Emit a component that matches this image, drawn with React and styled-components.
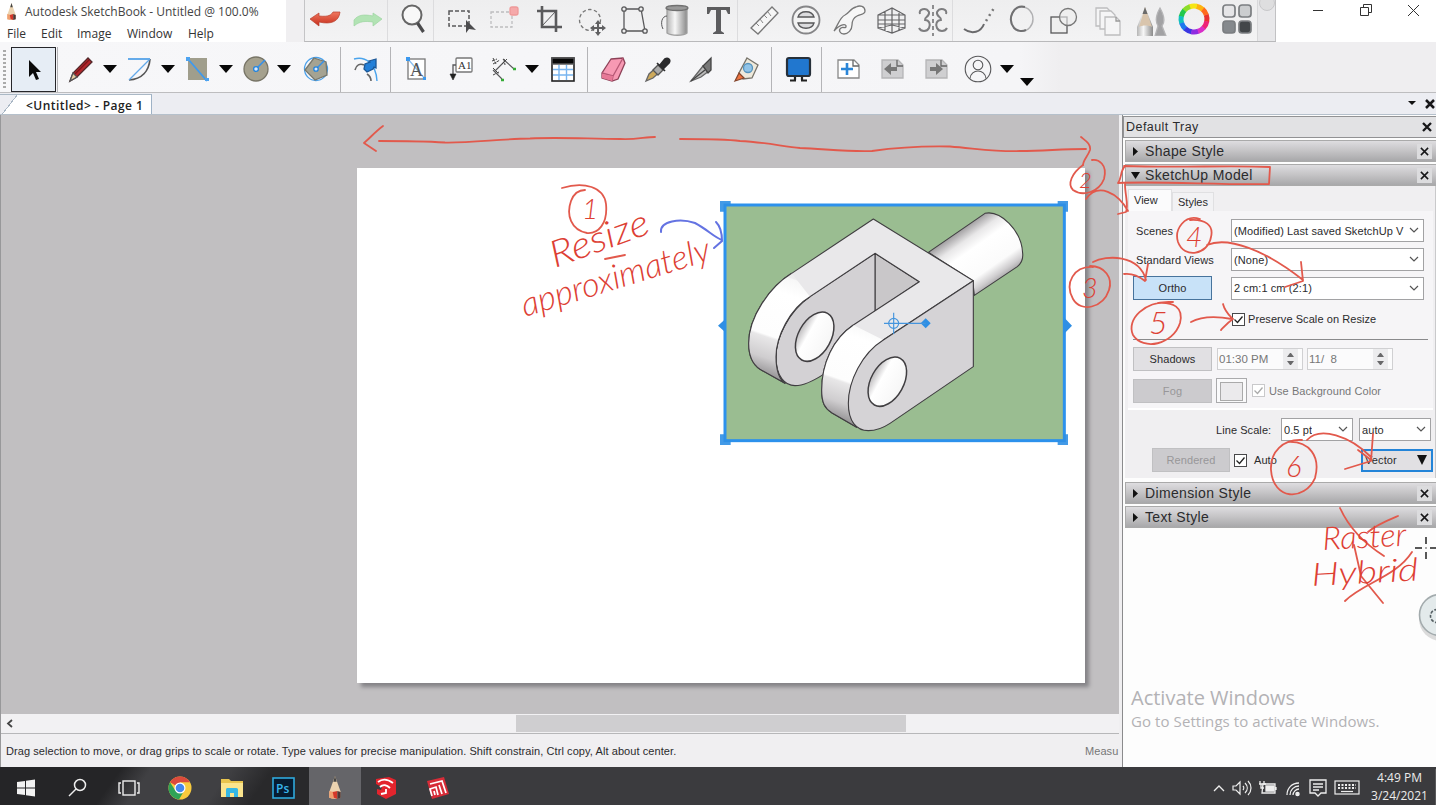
import React from "react";
import styled, { createGlobalStyle, css } from "styled-components";

const Global = createGlobalStyle`
  * { box-sizing: border-box; }
  html, body { margin: 0; padding: 0; overflow: hidden; }
  body { font-family: "Liberation Sans", Arial, sans-serif; font-size: 11px; color: #2b2b2d; }
  svg { display: block; }
`;

const Screen = styled.div`
  position: relative;
  width: 1436px;
  height: 805px;
  overflow: hidden;
  display: flex;
  flex-direction: column;
  background: #f0eff1;
`;

/* ---------- title row ---------- */
const TitleRow = styled.header`
  display: flex;
  height: 42px;
  flex: none;
`;
const TitleBlock = styled.div`
  width: 286px;
  background: #fff;
  font-family: "Open Sans", sans-serif;
  font-size: 12px;
  color: #444;
`;
const TitleLine = styled.div`
  display: flex;
  align-items: center;
  gap: 8px;
  height: 22px;
  padding-left: 6px;
  white-space: nowrap;
`;
const MenuBar = styled.nav`
  display: flex;
  height: 20px;
  padding: 3px 0 0 7px;
  line-height: 18px;
  color: #333;
`;
const MenuItem = styled.span`
  width: ${(p) => p.$w}px;
`;
const BrushBar = styled.div`
  display: flex;
  align-items: center;
  width: 972px;
  margin-left: 18px;
  border-left: 1px solid #c4c4c6;
  border-bottom: 1px solid #b9b9bb;
  background: linear-gradient(#eeeeef, #f3f3f4);
`;
const BrushCell = styled.div`
  width: 40px;
  height: 41px;
  margin-left: ${(p) => p.$gap}px;
  padding-bottom: 4px;
  flex: none;
  display: flex;
  align-items: center;
  justify-content: center;
  border-right: ${(p) => (p.$sep ? "1px solid #dcdcde" : "0")};
`;
const PuckSlot = styled.div`
  flex: 1;
  align-self: stretch;
  overflow: hidden;
  border-left: 1px solid #d8d8da;
  border-right: 1px solid #c2c2c4;
  background: #e8e8ea;
  padding-left: 1px;
`;
const WindowControls = styled.div`
  flex: 1;
  display: flex;
  justify-content: space-between;
  padding: 3px 16px 0 35px;
  background: #fff;
`;

/* ---------- second toolbar ---------- */
const ToolBar = styled.div`
  display: flex;
  align-items: center;
  height: 51px;
  flex: none;
  background: linear-gradient(90deg, #f7f7f9 0, #f5f5f7 1020px, #efeef0 1060px);
  border-bottom: 1px solid #bdbdbf;
`;
const Grip = styled.div`
  width: 3px;
  height: 38px;
  margin: 3px 5px 0 3px;
  background: repeating-linear-gradient(#aaa 0 2px, transparent 2px 4px);
`;
const ActiveTool = styled.div`
  width: 45px;
  height: 45px;
  margin-top: 5px;
  border: 1px solid #26262a;
  background: #e6edf5;
  display: flex;
  align-items: center;
  justify-content: center;
`;
const ToolCell = styled.div`
  width: 28px;
  height: 28px;
  margin: 4px 0 0 ${(p) => p.$gap}px;
  flex: none;
`;
const Divider = styled.div`
  width: 1px;
  height: 45px;
  margin: 5px 0 0 ${(p) => p.$gap}px;
  background: #b4b4b7;
  flex: none;
`;
const Caret = styled.div`
  width: 16px;
  margin: ${(p) => p.$drop || 4}px 0 0 ${(p) => p.$gap}px;
  flex: none;
  display: flex;
  justify-content: center;
  &::after {
    content: "";
    border: 7px solid transparent;
    border-top: 8px solid #080808;
    border-bottom: 0;
  }
`;

/* ---------- tab strip ---------- */
const TabStrip = styled.div`
  display: flex;
  align-items: flex-end;
  justify-content: space-between;
  height: 22px;
  flex: none;
  background: #ecedf2;
  border-bottom: 1px solid #b5c0cb;
`;
const DocTab = styled.div`
  width: 152px;
  height: 20px;
  padding-left: 26px;
  font: 600 12px/21px "Open Sans", sans-serif;
  letter-spacing: 0.45px;
  color: #222;
  white-space: nowrap;
  background: linear-gradient(128deg, transparent 0 13px, #a8b6c4 13px 14px, #fff 14px);
  border-top: 1px solid #aab8c5;
  border-right: 1px solid #9eb2c6;
`;
const StripButtons = styled.div`
  display: flex;
  gap: 9px;
  align-items: center;
  height: 21px;
  padding-right: 1px;
`;

/* ---------- body ---------- */
const Body = styled.main`
  display: flex;
  height: 652px;
  flex: none;
`;
const Left = styled.section`
  width: 1119px;
  flex: none;
  display: flex;
  flex-direction: column;
  border-left: 1px solid #98989a;
`;
const Canvas = styled.div`
  height: 599px;
  padding: 53px 0 0 356px;
  background: #c1bfc1;
`;
const Paper = styled.div`
  position: relative;
  width: 728px;
  height: 515px;
  background: #fff;
  box-shadow: 4px 4px 4px #858387;
`;
const Drawing = styled.svg`
  position: absolute;
  left: 353px;
  top: 22px;
  overflow: visible;
`;
const HScroll = styled.div`
  display: flex;
  height: 20px;
  padding-left: 5px;
  align-items: center;
  background: #f2f1f3;
  border-bottom: 1px solid #b7b7b9;
`;
const Thumb = styled.div`
  width: 390px;
  height: 17px;
  margin-left: 503px;
  background: #cfced0;
`;
const Status = styled.footer`
  flex: 1;
  display: flex;
  justify-content: space-between;
  align-items: center;
  padding-left: 5px;
  white-space: nowrap;
  letter-spacing: 0.078px;
`;

/* ---------- tray ---------- */
const Tray = styled.aside`
  flex: 1;
  min-width: 0;
  margin-left: 3px;
  padding-top: 1px;
  border-left: 1px solid #8b8b8d;
  background: #fdfdfd;
`;
const TrayHead = styled.div`
  display: flex;
  justify-content: space-between;
  align-items: center;
  height: 22px;
  padding: 0 4px 0 2px;
  font-size: 12.5px;
  letter-spacing: 0.45px;
  background: #e2e2e4;
  border: 1px solid #929294;
  border-right: 0;
`;
const SectionHead = styled.div`
  display: flex;
  align-items: center;
  height: 22px;
  margin: ${(p) => p.$mt}px 0 0 2px;
  padding: 0 4px 0 5px;
  font-size: 14px;
  letter-spacing: 0.35px;
  background: linear-gradient(#dedde0, #c4c3c5 50%, #a8a8aa);
  border: 1px solid #aaa;
  border-right: 0;
  & > span { flex: 1; margin-left: 5px; }
`;
const CloseBox = styled.div`
  width: 15px;
  height: 15px;
  padding: 3px;
  background: #dcdcde;
`;
const SectionBody = styled.div`
  height: 292px;
  margin-left: 2px;
  padding: 3px 2px 0 3px;
  background: #f0eff1;
  border-right: 1px solid #c9c9cb;
`;
const Tabs = styled.div`
  display: flex;
  align-items: flex-end;
  height: 22px;
`;
const Tab = styled.div`
  width: ${(p) => p.$w}px;
  height: ${(p) => (p.$on ? 22 : 19)}px;
  line-height: ${(p) => (p.$on ? 21 : 19)}px;
  padding-left: 5px;
  background: ${(p) => (p.$on ? "#fbfbfc" : "#f2f2f4")};
  border: 1px solid #e0e0e2;
  border-bottom: 0;
`;
const TabPanel = styled.div`
  height: 199px;
  padding: 8px 9px 0 5px;
  background: #f6f5f7;
  border-bottom: 2px solid #fff;
`;
const Row = styled.div`
  display: flex;
  align-items: center;
  height: ${(p) => p.$h}px;
  margin-top: ${(p) => p.$mt || 0}px;
`;
const Label = styled.div`
  width: ${(p) => p.$w}px;
  padding-left: ${(p) => p.$pl || 0}px;
  color: ${(p) => (p.$dim ? "#777" : "#2b2b2d")};
  white-space: nowrap;
  letter-spacing: 0.07px;
  flex: none;
`;
const Select = styled.div`
  display: flex;
  align-items: center;
  justify-content: space-between;
  width: ${(p) => p.$w}px;
  height: 23px;
  margin-left: ${(p) => p.$ml || 0}px;
  padding: 0 4px 0 2px;
  background: ${(p) => (p.$focus ? "#e1e0e3" : "#fff")};
  border: ${(p) => (p.$focus ? "2px solid #2384d8" : "1px solid #a2a2a4")};
  white-space: nowrap;
  letter-spacing: 0.1px;
  flex: none;
  & > span { overflow: hidden; }
  & > svg { flex: none; }
`;
const PushButton = styled.div`
  width: ${(p) => p.$w || 79}px;
  height: 24px;
  line-height: 23px;
  text-align: center;
  flex: none;
  border: 1px solid #c0c0c2;
  background: #e1e0e3;
  letter-spacing: 0.1px;
  ${(p) => p.$on && css`background: #c8e2f8; border-color: #47739c;`}
  ${(p) => p.$off && css`background: #cccbce; color: #989799;`}
`;
const Check = styled.div`
  width: 13px;
  height: 13px;
  flex: none;
  border: 1px solid ${(p) => (p.$dim ? "#c9c9cb" : "#48484a")};
  background: #fff;
`;
const Spin = styled.div`
  display: flex;
  align-items: center;
  justify-content: space-between;
  width: 86px;
  height: 22px;
  margin-left: ${(p) => p.$ml}px;
  padding: 0 4px 0 1px;
  color: #777;
  font-size: 11.5px;
  background: #fbfbfc;
  border: 1px solid #d0d0d2;
  white-space: pre;
`;
const Steppers = styled.div`
  display: flex;
  flex-direction: column;
  gap: 4px;
  width: 15px;
  padding: 4px;
  background: #ececee;
`;
const Up = styled.i`
  border: 3px solid transparent;
  border-top: 0;
  border-bottom: 4px solid #68686a;
  transform: ${(p) => (p.$down ? "rotate(180deg)" : "none")};
`;
const Rule = styled.div`
  height: 1px;
  margin-top: 11px;
  margin-right: -4px;
  background: #8a8a8c;
`;
const ColorWell = styled.div`
  width: 31px;
  height: 25px;
  margin: 0 5px 0 4px;
  padding: 3px;
  border: 1px solid #aaaaac;
  background: #fafafb;
  &::after { content: ""; display: block; height: 17px; border: 1px solid #aaa; background: #ebeaec; }
`;
const Activate = styled.div`
  padding: 156px 0 0 8px;
  font-family: "Open Sans", sans-serif;
  color: #b3b2b5;
  white-space: nowrap;
`;
const ActivateTitle = styled.div`
  font-size: 20px;
  line-height: 28px;
`;
const ActivateText = styled.div`
  font-size: 15px;
  line-height: 19px;
  letter-spacing: 0.08px;
`;

/* ---------- taskbar ---------- */
const TaskBar = styled.footer`
  display: flex;
  justify-content: space-between;
  height: 38px;
  flex: none;
  background:
    linear-gradient(125deg, #252527 0 100px, #404043 125px 190px, #29292b 225px 270px, #3b3b3e 300px 100%);
`;
const Apps = styled.div`
  display: flex;
`;
const AppCell = styled.div`
  width: 51.5px;
  display: flex;
  align-items: center;
  justify-content: center;
  padding-top: 3px;
  background: ${(p) => (p.$on ? "#656569" : "transparent")};
`;
const Notify = styled.div`
  display: flex;
  align-items: center;
  gap: 6px;
  padding-top: 4px;
  color: #ececec;
`;
const Clock = styled.div`
  width: 72px;
  margin: -3px 0 0 -2px;
  font: 12px/18px "Open Sans", sans-serif;
  text-align: center;
  border-right: 1px solid #5a5a5c;
  white-space: nowrap;
`;

const Markup = styled.svg`
  position: absolute;
  left: 0;
  top: 0;
  pointer-events: none;
  font-family: Lato, "Open Sans", sans-serif;
  font-style: italic;
  font-weight: 300;
`;

/* ---------- icons ---------- */
const Svg = ({ s = 34, children, ...r }) => (
  <svg width={s} height={s} viewBox={`0 0 ${s} ${s}`} fill="none" stroke="#58585a" strokeWidth="1.3" {...r}>{children}</svg>
);
const Hidden = styled.svg`
  position: absolute;
`;
const Arm = ({ id, x1, y1, x2, y2 }) => (
  <linearGradient id={id} gradientUnits="userSpaceOnUse" x1={x1} y1={y1} x2={x2} y2={y2}>
    <stop stopColor="#eae9ea" /><stop offset=".16" stopColor="#eeedee" /><stop offset=".17" stopColor="#f7f7f7" /><stop offset=".3" stopColor="#fff" /><stop offset=".66" stopColor="#fdfdfd" /><stop offset=".68" stopColor="#e8e7e8" /><stop offset=".84" stopColor="#cfcdcf" /><stop offset="1" stopColor="#8b898b" />
  </linearGradient>
);
const Gradients = () => (
  <Hidden width="0" height="0">
    <defs>
      <linearGradient id="red" x2="0" y2="1"><stop stopColor="#f07860" /><stop offset="1" stopColor="#c62e1c" /></linearGradient>
      <linearGradient id="metal"><stop stopColor="#b5b5b5" /><stop offset=".4" stopColor="#f7f7f7" /><stop offset="1" stopColor="#8a8a8a" /></linearGradient>
      <linearGradient id="cyl" gradientUnits="userSpaceOnUse" x1="740" y1="128" x2="850" y2="285">
        <stop stopColor="#a09ea0" /><stop offset=".18" stopColor="#e8e7e8" /><stop offset=".35" stopColor="#fff" /><stop offset=".75" stopColor="#fbfbfb" /><stop offset=".9" stopColor="#cfcdcf" /><stop offset="1" stopColor="#a5a3a5" />
      </linearGradient>
      <Arm id="armA" x1={300} y1={220} x2={180} y2={570} />
      <Arm id="armB" x1={520} y1={355} x2={400} y2={702} />
      <linearGradient id="hole" x1="0" x2="1" y1="0" y2="0"><stop stopColor="#bdbbbd" /><stop offset=".3" stopColor="#fff" /><stop offset="1" stopColor="#f6f6f6" /></linearGradient>
    </defs>
  </Hidden>
);

const brushTools = [
  [0, <Svg key="i"><path d="M2 17l9-6v3c10 1 12-1 14-4h7c-1 9-8 13-21 10v4z" fill="url(#red)" stroke="#b8402e" strokeWidth=".7" /></Svg>],
  [3, <Svg key="i"><path d="M31 17l-9-6v3c-10-2-15-1-19 4v6c6-5 11-5 19-4v4z" fill="#b2e3b4" stroke="#9cd4a0" strokeWidth=".7" /></Svg>, 1],
  [6, <Svg key="i"><circle cx="15" cy="13" r="9.500" fill="#f8f8f8" stroke="#666" strokeWidth="2" /><path d="M20.500 21l6 9" stroke="#4a4a4c" strokeWidth="3.200" /></Svg>, 1],
  [7, <Svg key="i"><rect x="5" y="9" width="20" height="15" strokeDasharray="4 2" strokeWidth="1.500" /><path d="M22 18v13l3-4 7 1z" fill="#4c4c4e" stroke="none" /></Svg>],
  [3, <Svg key="i"><rect x="4" y="10" width="21" height="15" stroke="#bdbdbf" strokeDasharray="3 2" /><rect x="23" y="5" width="8" height="8" rx="2" fill="#f5a9aa" stroke="#e99" /></Svg>],
  [5, <Svg key="i"><path d="M10 4v21h20M5 9h19v21" stroke="#5a5a5c" strokeWidth="2.600" /><path d="M10 24L24 9" strokeWidth="1" /></Svg>],
  [3, <Svg key="i"><circle cx="15" cy="18" r="10.500" strokeDasharray="3.500 2.400" stroke="#777" /><path d="M23 18l3 4h-2v3h3v-2l4 3-4 3v-2h-3v3h2l-3 4-3-4h2v-3h-3v2l-4-3 4-3v2h3v-3h-2z" fill="#606062" stroke="none" /></Svg>],
  [1, <Svg key="i"><path d="M8 7h17l4 22H8z" />{[[8, 7], [25, 7], [29, 29], [8, 29]].map((p) => <circle key={p} cx={p[0]} cy={p[1]} r="2.200" fill="#eee" />)}</Svg>],
  [2, <Svg key="i"><path d="M9 6v25c4 3 17 3 20 0V6z" fill="url(#metal)" stroke="#a0a0a0" /><ellipse cx="19" cy="6" rx="11" ry="2.500" fill="#999" stroke="#707070" /><path d="M9 14C4 14 2 21 5 27" strokeWidth="1" /></Svg>],
  [3, <Svg key="i"><path d="M6 5h23v7h-2l-2-4h-5v21l3 2v1H12v-1l3-2V8h-5l-2 4H6z" fill="#5c5c5e" stroke="none" /></Svg>, 1],
  [6, <Svg key="i"><path d="M4 26L25 5l6 6L11 32z" fill="#f6f6f6" stroke="#777" /><path d="M9 21l3 3m1-7l3 4m1-8l3 3m1-6l3 4" stroke="#888" strokeWidth="1" /></Svg>],
  [2, <Svg key="i"><circle cx="17" cy="18" r="13.500" fill="#f3f3f3" strokeWidth="1.800" stroke="#858587" /><path d="M9 15h16c-2-7-14-7-16 0zm0 6h16c-2 7-14 7-16 0z" fill="#dcdcde" /></Svg>],
  [3, <Svg key="i"><path d="M2 29C6 23 8 15 13 13c4-2 6-7 11-8 4-2 9-1 9 4 0 4-5 3-8 5-4 2-5 5-5 9 0 5-4 9-8 9-4 0-6-4-3-6s3 1 5-1c1-4-6-3-12 4z" fill="#f7f7f7" strokeWidth="1.300" stroke="#777" /></Svg>],
  [2, <Svg key="i"><path d="M4 13l14-7 13 7v13l-13 5-14-5zm0 0h27M4 18h27M4 22h27M4 26l14-3 13 3M18 6v25M11 9v20M25 9v20" stroke="#646466" strokeWidth="1.200" /></Svg>],
  [2, <Svg key="i"><path d="M17 3v31" strokeDasharray="4 3" /><path d="M4 12c-2-5 6-7 9-2 1 5-5 5-4 8 4 0 6 4 4 8-2 4-8 4-10 0m27-14c2-5-6-7-9-2-1 5 5 5 4 8-4 0-6 4-4 8 2 4 8 4 10 0" stroke="#7d7d7f" strokeWidth="2" /></Svg>, 1],
  [7, <Svg key="i"><path d="M1 27c8 6 17 3 20-5" stroke="#6a6a6c" strokeWidth="2" /><path d="M23 19l8-13" strokeDasharray="2 4" strokeWidth="2.500" stroke="#777" /></Svg>],
  [2, <Svg key="i"><ellipse cx="17" cy="17" rx="11" ry="12" stroke="#b0b0b2" strokeWidth="1.400" /><path d="M20 5C8 2 2 17 9 26c3 3 8 4 12 2" strokeWidth="2" stroke="#707072" /></Svg>],
  [2, <Svg key="i"><rect x="4" y="15" width="16" height="16" fill="#efefef" /><circle cx="21" cy="15" r="8.500" fill="#eee9" stroke="#777" /></Svg>],
  [5, <Svg key="i">{[[4, 6], [8, 9], [13, 15]].map((p) => <path key={p} d={`M${p[0]} ${p[1]}h11l4 4v14h-15z`} fill="#f5f5f6" stroke="#bdbdbf" />)}<path d="M24 15v4h4" stroke="#999" /></Svg>],
  [3, <Svg key="i"><path d="M10 5l8 20v9H2v-9z" fill="url(#metal)" stroke="none" /><path d="M10 5l7 20c-3-2-10-2-13 0z" fill="#d9c5ad" stroke="none" /><path d="M10 5l2.500 7h-5z" fill="#6b6b6b" stroke="none" /><path d="M25 6c4 7 5 14 2 18l4 10H20l3-10c-3-5-2-11 2-18z" fill="#a2a2a4" stroke="#b5b5b7" /></Svg>],
  [2, <Svg key="i">{["#e83131", "#ff6a1d", "#ffb30f", "#f6e614", "#8ddd2a", "#22c84c", "#12c0be", "#1e78ee", "#3a36e2", "#8f2ce0", "#d92fc8", "#ee2377"].map((c, n) => {
    const a = (n * 30 - 12) * Math.PI / 180, b = a + 0.56;
    return <path key={c} stroke={c} strokeWidth="5" d={`M${17 + 13 * Math.cos(a)} ${17 - 13 * Math.sin(a)}A13 13 0 0 0 ${17 + 13 * Math.cos(b)} ${17 - 13 * Math.sin(b)}`} />;
  })}</Svg>],
  [3, <Svg key="i">{[[3, 3, "#e5e5e7"], [19, 3, "#cbcdcf"], [3, 19, "#85898d"], [19, 19, "#424649"]].map((p) => <rect key={p} x={p[0]} y={p[1]} width="12" height="12" rx="3" fill={p[2]} stroke="#7b7e81" strokeWidth="1.700" />)}</Svg>],
];

const Page28 = ({ children, off }) => (
  <Svg s={28}><path d="M4 5h16l5 5v13H4z" fill={off ? "#cfcfd1" : "#fff"} stroke={off ? "#b5b5b7" : "#888"} /><path d="M19 5v6h6" stroke="#666" />{children}</Svg>
);
const tools = [
  ["sep", 1],
  [9, <Svg key="i" s={28}><path d="M3 26l3-8L21 3l4 4L10 22z" fill="#b3272c" stroke="#52282a" /><path d="M3 26l3-8 4 4z" fill="#ead0a5" stroke="#555" /><path d="M8 19L22 5" stroke="#7c1519" /></Svg>],
  ["caret", 7],
  [8, <Svg key="i" s={28}><path d="M2 4h22" stroke="#3f97e6" strokeWidth="1.600" /><path d="M24 4C23 16 16 24 3 25" stroke="#555" strokeWidth="1.700" /><path d="M24 4L3 25" stroke="#62a8e8" /></Svg>],
  ["caret", 6],
  [7, <Svg key="i" s={28}><rect x="5" y="3" width="19" height="22" fill="#a09e8c" stroke="none" /><path d="M5 4l19 22" stroke="#3e9aef" strokeWidth="1.800" /><path d="M3 2h4v4H3zM22 23h4v3h-4z" fill="#4da3f0" stroke="none" /></Svg>],
  ["caret", 7],
  [8, <Svg key="i" s={28}><circle cx="14" cy="14" r="12" fill="#a5a18e" stroke="#777466" /><path d="M14 14l9-9" stroke="#3490ea" strokeWidth="1.600" /><circle cx="14" cy="14" r="2.400" fill="#d8eaff" stroke="#2384dd" /></Svg>],
  ["caret", 6],
  [10, <Svg key="i" s={28}><circle cx="14" cy="14" r="11.500" stroke="#49a0ea" /><path d="M12 3l12 4 1 13-12 5L3 15z" fill="#a5a392" stroke="#77776c" /><path d="M14 14l8-8" stroke="#3490ea" strokeWidth="1.500" /><circle cx="14" cy="14" r="2.200" fill="#d8eaff" stroke="#2384dd" /></Svg>],
  ["sep", 10],
  [11, <Svg key="i" s={28}><path d="M2 4c11-3 22 4 23 22" stroke="#4ba4ec" strokeWidth="1.400" /><path d="M3 15c1-5 5-7 9-5m3 9c3 2 4 4 4 7" stroke="#666" strokeWidth="1.600" /><path d="M24 4l-7 2 1 1-5 2-1 5 3 3 6-3 1-2 2 1z" fill="#2480d8" stroke="#1c5796" /></Svg>],
  ["sep", 10],
  [12, <Svg key="i" s={28}><rect x="5" y="4" width="17" height="20" fill="#fff" stroke="#777" /><path d="M5 4l17 20" stroke="#8abff0" /><text x="7" y="21" fontFamily="Liberation Serif" fontSize="18" fill="#555" stroke="none">A</text><path d="M3 2h4v4H3zM20 22h3v3h-3z" fill="#3b98ee" stroke="none" /></Svg>],
  [16, <Svg key="i" s={28}><rect x="9" y="3" width="16" height="14" rx="1" fill="#fff" stroke="#777" /><text x="11" y="14" fontFamily="Liberation Serif" fontSize="11" fill="#333" stroke="none">A1</text><path d="M9 10H6v10" /><path d="M3 19h6l-3 6z" fill="#222" stroke="#222" strokeWidth=".6" /></Svg>],
  [14, <Svg key="i" s={28}><path d="M6 16L16 6m-12 9l9 9M14 4l11 10" strokeWidth="1.100" /><path d="M3 6l5-2m-4 5l7-4M4 3l3 6m6 0l5-5M4 13l6 6M15 4l1 6M4 20l6-3" stroke="#444" strokeWidth="1" strokeDasharray="3 1" /><path d="M12 25h3M24 14h3" stroke="#36ac36" strokeWidth="2.500" /></Svg>],
  ["caret", 7],
  [9, <Svg key="i" s={28}><rect x="3" y="3" width="22" height="23" fill="#fff" stroke="#222" strokeWidth="1.600" /><path d="M3 3h22v6H3z" fill="#080808" /><path d="M4 14.500h20M4 20h20M10 10v15M17.500 10v15" stroke="#78b5f0" strokeWidth="1.400" /></Svg>],
  ["sep", 10],
  [12, <Svg key="i" s={28}><path d="M11 4l12-1 2 5-7 16-6 2-10-3v-5z" fill="#f799b3" stroke="#8d4258" /><path d="M2 18l11 3L23 3M13 21l-1 5" stroke="#b75875" /><path d="M2 19l11 2-1 5-10-3z" fill="#e77896" stroke="none" /></Svg>],
  [16, <Svg key="i" s={28}><path d="M2 26l3-7 9-8 4 4-9 8z" fill="#cda95b" stroke="#666" /><path d="M9 15l5-5 5 5-5 5z" fill="#aaa" stroke="#555" /><path d="M13 8l8 8M16 10l5-6c3-2 6 1 4 4l-6 6z" fill="#2b2b2d" stroke="#2b2b2d" strokeWidth="1.700" /></Svg>],
  [17, <Svg key="i" s={28}><path d="M2 26L14 11l6 5-8 6z" fill="#bbb" stroke="#666" /><path d="M14 11l8-8v12l-3 3z" fill="#777" stroke="#444" /><path d="M2 26l14-11" stroke="#444" /></Svg>],
  [16, <Svg key="i" s={28}><path d="M14 3l11 7-6 13-9 1-4-6z" fill="#eee9db" stroke="#77736a" /><path d="M2 26l4-8 5 5z" fill="#ee7440" stroke="#84452b" /><circle cx="15" cy="13" r="4.500" fill="#91c4e8" stroke="#5794bd" /></Svg>],
  ["sep", 10],
  [12, <Svg key="i" s={28}><rect x="3" y="3" width="23" height="18" rx="2" fill="#2177cf" stroke="#27303a" strokeWidth="2.200" /><path d="M11 22v3m7-3v3M6 25.500h6m5 0h6" stroke="#222" strokeWidth="2.200" /></Svg>],
  ["sep", 9],
  [12, <Page28 key="i"><path d="M7 14h12M13 8v12" stroke="#2b86d8" strokeWidth="2.600" /></Page28>],
  [16, <Page28 key="i" off><path d="M6 14l7-6v4h6v4h-6v4z" fill="#777" stroke="none" /></Page28>],
  [16, <Page28 key="i" off><path d="M21 14l-7-6v4H8v4h6v4z" fill="#777" stroke="none" /></Page28>],
  [14, <Svg key="i" s={28}><circle cx="14" cy="14" r="12.800" strokeWidth="1.100" /><circle cx="14" cy="10" r="4.800" strokeWidth="1.100" /><path d="M6 23.500c1-10 15-10 16 0" strokeWidth="1.100" /></Svg>],
  ["caret", 7],
  ["caret", 4, 29],
];

const X = ({ s = 9, w = 2.2, c = "#171719" }) => (
  <svg width={s} height={s} viewBox="0 0 10 10" stroke={c} strokeWidth={w}><path d="M1 1l8 8M9 1L1 9" /></svg>
);
const Chevron = () => <svg width="10" height="7" viewBox="0 0 10 7" fill="none" stroke="#555" strokeWidth="1.2"><path d="M1 1l4 4 4-4" /></svg>;
const Tick = ({ dim }) => (
  <Check $dim={dim}><svg width="11" height="11" viewBox="0 0 11 11" fill="none" stroke={dim ? "#aaa" : "#222"} strokeWidth="1.3"><path d="M1.500 5.500l3 3 5-6" /></svg></Check>
);
const Tri = ({ open }) => (
  <svg width="9" height="9" viewBox="0 0 9 9" fill="#111"><path d={open ? "M0 1h9L4.500 8z" : "M2 0v9l5-4.500z"} /></svg>
);
const Section = ({ title, open, mt }) => (
  <SectionHead $mt={mt}><Tri open={open} /><span>{title}</span><CloseBox><X w={1.7} /></CloseBox></SectionHead>
);
const Combo = ({ children, ...r }) => <Select {...r}><span>{children}</span><Chevron /></Select>;
const Spinner = ({ children, ml }) => <Spin $ml={ml}>{children}<Steppers><Up /><Up $down /></Steppers></Spin>;

const PencilTip = ({ w, h }) => (
  <svg width={w} height={h} viewBox="0 0 12 20"><path d="M6 0l5 14v5c-3 1-7 1-10 0v-5z" fill="#ecd3b0" /><path d="M6 0l1.500 5h-3z" fill="#444" /><path d="M1 13l4 1v6l-4-1z" fill="#f0a070" /><path d="M4 14l4-1v7l-3-1z" fill="#d4382a" /><path d="M8 13l3 1v5l-3 1z" fill="#4e3838" /></svg>
);

const Model = () => (
  <Drawing width="380" height="265" viewBox="0 0 1140 795">
    <rect x="45" y="45" width="1018" height="707" fill="#9abd91" stroke="#2c91ec" strokeWidth="9" />
    <g stroke="#403e41" strokeWidth="3.300" strokeLinejoin="round">
      <path d="M655 187L825 70C870 60 935 120 938 190C940 210 932 222 922 230L793 316L788 272Z" fill="url(#cyl)" />
      <path d="M495 190L628 275L495 365Z" fill="#c9c7c9" />
      <path d="M495 190L300 320C230 370 198 450 198 500C198 560 225 587 255 587C285 587 315 570 345 550L495 365Z" fill="#d3d1d4" />
      <path d="M490 87L245 250C180 290 116 380 116 460C116 500 130 525 150 538L225 580C206 566 198 535 198 500C198 440 240 355 300 320L495 190L628 275L430 405C370 445 335 520 335 600C335 640 345 655 365 668L440 712C425 700 415 675 415 640C415 575 455 490 520 450L790 272Z" fill="#e9e8ea" />
      <path d="M245 250C180 290 116 380 116 460C116 500 130 525 150 538L225 580C206 566 198 535 198 500C198 440 240 355 300 320Z" fill="url(#armA)" stroke="none" />
      <path d="M430 405C370 445 335 520 335 600C335 640 345 655 365 668L440 712C425 700 415 675 415 640C415 575 455 490 520 450Z" fill="url(#armB)" stroke="none" />
      <path d="M245 250C180 290 116 380 116 460C116 500 130 525 150 538L225 580C206 566 198 535 198 500C198 440 240 355 300 320M430 405C370 445 335 520 335 600C335 640 345 655 365 668L440 712" fill="none" />
      <path d="M790 272L520 450C455 490 415 575 415 640C415 695 440 722 475 722C500 722 525 710 540 700L790 530Z" fill="#d5d3d6" />
      <ellipse cx="314" cy="440" rx="49" ry="80" transform="rotate(29 314 440)" fill="url(#hole)" strokeWidth="4.500" />
      <ellipse cx="532" cy="575" rx="49" ry="80" transform="rotate(29 532 575)" fill="url(#hole)" strokeWidth="4.500" />
    </g>
    <g fill="#2f8fe4" stroke="none">
      <path d="M30 33h32v15H45v17H30zM1043 33h31v32h-15V48h-16zM30 765h32v-15H45v-17H30zM1043 765h31v-32h-15v17h-16z" opacity=".9" />
      <path d="M24 407l22-20v40zM1086 407l-25-26v52z" />
      <path d="M632 400l15-15 15 15-15 15z" />
    </g>
    <g stroke="#4595dd" strokeWidth="3.500" fill="none"><circle cx="551" cy="400" r="15" /><path d="M551 368v64M522 400h125" /></g>
  </Drawing>
);

const Notes = () => (
  <Markup width="1436" height="805" viewBox="0 0 1436 805">
    <g fill="none" stroke="#e2594c" strokeWidth="1.800" strokeLinecap="round" strokeLinejoin="round">
      <path d="M655 137C645 137 635 140 620 139C590 139 560 137 530 138.500C500 139 470 143 445 142.500C420 141 400 141 379 141M383 126C376 131 370 138 364 143L376 151" />
      <path d="M680 139C700 139 725 139 740 141C765 142 785 147 800 148C825 149 850 152 872 151C900 147 925 146 950 146.500C980 149 1000 152 1020 151C1045 151 1060 149 1086 149M1081 137C1086 141 1091 144 1090 150C1088 156 1083 160 1083 165" />
      <path d="M1083 165C1072 173 1067 184 1073 190C1083 197 1099 192 1104 179C1108 164 1098 159 1092 160M1086 199C1098 182 1118 193 1128 211M1125 184C1125 196 1129 205 1126 212L1118 214" />
      <path d="M1124 166C1180 168 1230 165 1270 167L1269 184C1220 185 1160 181 1118 183C1122 178 1120 171 1125 166" />
      <path d="M1093 267C1074 266 1064 283 1073 299C1081 313 1103 308 1109 290C1113 278 1105 266 1090 266M1093 262C1106 255 1139 254 1146 280M1124 274C1132 273 1140 277 1145 281L1148 264" />
      <path d="M1200 219C1185 214 1174 229 1178 242C1184 259 1208 255 1211 237C1214 225 1205 219 1190 220M1207 245C1228 236 1265 250 1303 280M1301 262L1303 281L1285 287" />
      <path d="M1173 302C1144 300 1126 320 1133 335C1143 351 1173 345 1180 323C1184 307 1173 302 1158 303M1191 322C1202 316 1216 316 1232 319M1223 304C1225 312 1229 315 1233 319C1227 323 1224 327 1221 330" />
      <path d="M1302 440C1283 439 1270 452 1271 470C1273 500 1304 502 1315 478C1321 456 1309 441 1288 442M1307 440C1320 426 1350 436 1371 457M1373 434L1371 461L1345 469M1358 450L1371 460" />
      <path d="M562 188C584 181 604 187 606 204C608 224 598 234 587 233C571 230 566 215 571 201C574 193 580 190 585 190M605 259L625 255" />
      <path d="M1340 508C1349 528 1365 544 1384 556M1354 545L1361 576L1383 603M1345 601C1363 583 1396 577 1412 552M1398 516C1386 521 1376 525 1368 532" />
    </g>
    <path d="M661 232C660 221 680 218 695 223C708 230 714 237 722 240M716 222C720 226 722 232 722 241L714 248" fill="none" stroke="#6473e2" strokeWidth="2" strokeLinecap="round" />
    <g fill="#dd4034">
      <text x="582" y="219" fontSize="28">1</text>
      <text x="1079" y="188" fontSize="22">2</text>
      <text x="1082" y="298" fontSize="27">3</text>
      <text x="1186" y="247" fontSize="28">4</text>
      <text x="1149" y="334" fontSize="32">5</text>
      <text x="1286" y="477" fontSize="29">6</text>
      <text transform="translate(555 268) rotate(-20)" fontSize="37" textLength="103" lengthAdjust="spacingAndGlyphs">Resize</text>
      <text transform="translate(525 317) rotate(-17)" fontSize="34" textLength="196" lengthAdjust="spacingAndGlyphs">approximately</text>
      <text transform="translate(1323 550) rotate(-3)" fontSize="32" textLength="84" lengthAdjust="spacingAndGlyphs">Raster</text>
      <text transform="translate(1312 586) rotate(-3)" fontSize="32" textLength="107" lengthAdjust="spacingAndGlyphs">Hybrid</text>
    </g>
    <path d="M1426 537v7m0 8v7m-11-11h7m8 0h6M1425.500 548h1" stroke="#222" strokeWidth="1.500" />
    <circle cx="1441" cy="619" r="22" fill="#0002" />
    <circle cx="1440" cy="615" r="20.500" fill="#e3eaeb" stroke="#a3abad" strokeWidth="1.600" />
    <circle cx="1437" cy="616" r="6.500" fill="none" stroke="#555f63" strokeWidth="1.600" strokeDasharray="3 1.500" />
  </Markup>
);

const taskApps = [
  <svg key="w" width="18" height="18" viewBox="0 0 18 18" fill="#f2f2f2"><path d="M0 3l8-1v6.500H0zM9 1.800L18 .5v8H9zM0 9.500h8V16l-8-1zM9 9.500h9v8l-9-1.300z" /></svg>,
  <svg key="s" width="19" height="19" viewBox="0 0 19 19" fill="none" stroke="#eee" strokeWidth="1.500"><circle cx="12" cy="7" r="5.500" /><path d="M8 11l-7 7" /></svg>,
  <svg key="t" width="22" height="18" viewBox="0 0 22 18" fill="none" stroke="#eee" strokeWidth="1.400"><rect x="5" y="2" width="12" height="14" /><path d="M3 4H1v10h2M19 4h2v10h-2" /></svg>,
  <svg key="c" width="24" height="24" viewBox="0 0 24 24"><circle cx="12" cy="12" r="11.500" fill="#f8ca3e" /><path d="M12 12L2 6.300A11.500 11.500 0 0 1 22 6.300H12z" fill="#db4a3c" /><path d="M2 6.300A11.500 11.500 0 0 0 11 23.500L16.500 14 12 17l-5-3z" fill="#2fa357" /><circle cx="12" cy="12" r="5.500" fill="#fff" /><circle cx="12" cy="12" r="4.300" fill="#4587ee" /></svg>,
  <svg key="f" width="24" height="20" viewBox="0 0 24 20"><path d="M1 1h8l2 2h12v16H1z" fill="#e8c44e" /><path d="M1 5h22v14H1z" fill="#fae48d" /><path d="M6 19v-7c0-2 1-2 2-2h8c2 0 2 1 2 2v7h-4v-4h-4v4z" fill="#35b7e4" /></svg>,
  <svg key="p" width="23" height="22" viewBox="0 0 23 22"><rect x="1" y="1" width="21" height="20" fill="#071c31" stroke="#2fa9dc" strokeWidth="1.600" /><text x="4" y="15.500" fontFamily="Open Sans" fontSize="12" fontWeight="600" fill="#37b6ec">Ps</text></svg>,
  <PencilTip key="k" w={14} h={23} />,
  <svg key="u" width="22" height="24" viewBox="0 0 22 24"><path d="M1 3l13-2 7 3v14l-10 5-9-5V13l4 1 1-3-6-3z" fill="#e3242d" /><path d="M3 6c5-4 11-2 15 1M5 11c3-3 7-2 10 1M6 18l5-1v-4" fill="none" stroke="#fff" strokeWidth="1.800" /></svg>,
  <svg key="l" width="24" height="24" viewBox="0 0 24 24"><path d="M1 5l17-4 5 17-17 5z" fill="#d72c38" /><path d="M4 8l12-3 4 12M6 20l-2-7 6-2 2 8M8 15l1 4M13 9l3 9" fill="none" stroke="#fff" strokeWidth="1.700" /></svg>,
];

export default function App() {
  return (
    <Screen>
      <Global />
      <Gradients />
      <TitleRow>
        <TitleBlock>
          <TitleLine><PencilTip w={11} h={17} />Autodesk SketchBook - Untitled @ 100.0%</TitleLine>
          <MenuBar>
            <MenuItem $w={34}>File</MenuItem><MenuItem $w={36}>Edit</MenuItem><MenuItem $w={50}>Image</MenuItem>
            <MenuItem $w={61}>Window</MenuItem><MenuItem $w={30}>Help</MenuItem>
          </MenuBar>
        </TitleBlock>
        <BrushBar>
          {brushTools.map(([gap, icon, sep], i) => <BrushCell key={i} $gap={gap} $sep={sep}>{icon}</BrushCell>)}
          <PuckSlot><svg width="16" height="12"><circle cx="8" cy="3" r="7.500" fill="#dededf" stroke="#c8c8ca" /></svg></PuckSlot>
        </BrushBar>
        <WindowControls>
          <Svg s={14} stroke="#333" strokeWidth="1"><path d="M2 7.500h10" /></Svg>
          <Svg s={14} stroke="#333" strokeWidth="1"><path d="M1.500 4.500h8v8h-8zM4.500 4V1.500h8v8H10" /></Svg>
          <Svg s={14} stroke="#333" strokeWidth="1"><path d="M2 2l11 11M13 2L2 13" /></Svg>
        </WindowControls>
      </TitleRow>
      <ToolBar>
        <Grip />
        <ActiveTool><svg width="14" height="22" viewBox="0 0 14 22"><path d="M2 1v17l4-4 3 7 3-1-3-7h5z" fill="#0a0a0a" /></svg></ActiveTool>
        {tools.map((t, i) => t[0] === "sep" ? <Divider key={i} $gap={t[1]} /> : t[0] === "caret" ? <Caret key={i} $gap={t[1]} $drop={t[2]} /> : <ToolCell key={i} $gap={t[0]}>{t[1]}</ToolCell>)}
      </ToolBar>
      <TabStrip>
        <DocTab>&lt;Untitled&gt; - Page 1</DocTab>
        <StripButtons><svg width="8" height="5"><path d="M0 0h8L4 4z" fill="#111" /></svg><X s={10} w={2.5} /></StripButtons>
      </TabStrip>
      <Body>
        <Left>
          <Canvas><Paper><Model /></Paper></Canvas>
          <HScroll><svg width="7" height="9" viewBox="0 0 7 9" fill="none" stroke="#444" strokeWidth="1.800"><path d="M6 1L2 4.500 6 8" /></svg><Thumb /></HScroll>
          <Status>
            <span>Drag selection to move, or drag grips to scale or rotate. Type values for precise manipulation. Shift constrain, Ctrl copy, Alt about center.</span>
            <Label $w={34} $dim>Measu</Label>
          </Status>
        </Left>
        <Tray>
          <TrayHead>Default Tray<X s={10} w={2.3} /></TrayHead>
          <Section title="Shape Style" mt={2} />
          <Section title="SketchUp Model" open mt={2} />
          <SectionBody>
            <Tabs><Tab $on $w={44}>View</Tab><Tab $w={42}>Styles</Tab></Tabs>
            <TabPanel>
              <Row $h={23}><Label $w={98} $pl={3}>Scenes</Label><Combo $w={193}>(Modified) Last saved SketchUp V</Combo></Row>
              <Row $h={23} $mt={6}><Label $w={98} $pl={3}>Standard Views</Label><Combo $w={193}>(None)</Combo></Row>
              <Row $h={24} $mt={5}><PushButton $on>Ortho</PushButton><Combo $w={193} $ml={19}>2 cm:1 cm (2:1)</Combo></Row>
              <Row $h={18} $mt={10}><Label $w={99} /><Tick /><Label $pl={3}>Preserve Scale on Resize</Label></Row>
              <Rule />
              <Row $h={24} $mt={7}><PushButton>Shadows</PushButton><Spinner ml={5}>01:30 PM</Spinner><Spinner ml={4}>{"11/  8"}</Spinner></Row>
              <Row $h={25} $mt={7}><PushButton $off>Fog</PushButton><ColorWell /><Tick dim /><Label $dim $pl={4}>Use Background Color</Label></Row>
            </TabPanel>
            <Row $h={23} $mt={8}><Label $w={153} $pl={88}>Line Scale:</Label><Combo $w={72}>0.5 pt</Combo><Combo $w={72} $ml={6}>auto</Combo></Row>
            <Row $h={24} $mt={7}><Label $w={24} /><PushButton $w={78} $off>Rendered</PushButton><Label $w={4} /><Tick /><Label $w={114} $pl={7}>Auto</Label>
              <Select $w={72} $focus><span>Vector</span><svg width="10" height="10"><path d="M0 0h10L5 10z" fill="#111" /></svg></Select></Row>
          </SectionBody>
          <Section title="Dimension Style" mt={4} />
          <Section title="Text Style" mt={2} />
          <Activate>
            <ActivateTitle>Activate Windows</ActivateTitle>
            <ActivateText>Go to Settings to activate Windows.</ActivateText>
          </Activate>
        </Tray>
      </Body>
      <TaskBar>
        <Apps>{taskApps.map((icon, i) => <AppCell key={i} $on={i === 6}>{icon}</AppCell>)}</Apps>
        <Notify>
          <Svg s={14} stroke="#eee"><path d="M2 10l5-5 5 5" /></Svg>
          <Svg s={20} stroke="#eee" strokeWidth="1.200"><path d="M1 8h3l4-4v12l-4-4H1zM11 8c1 1 1 3 0 4m2-7c3 3 3 7 0 10m3-12c4 4 4 10 0 14" /></Svg>
          <Svg s={20} stroke="#eee"><path d="M5 6h12v9H4zM18 9v3" /><path d="M8 8h8v5H8z" fill="#eee" /><path d="M1 6h7M2 3v3m4-3v3m-3 0v4h3" /></Svg>
          <Svg s={18} stroke="#eee"><path d="M3 16C3 9 8 4 15 4M6 16c0-5 4-9 9-9m-6 9c0-3 3-6 6-6" /><circle cx="13.500" cy="15" r="1.600" fill="#eee" /></Svg>
          <Svg s={20} stroke="#eee"><path d="M2 2h16v13h-5l-3 3-3-3H2zM5 6h10M5 9h10M5 12h6" /></Svg>
          <svg width="26" height="16" viewBox="0 0 26 16" fill="none" stroke="#eee" strokeWidth="1.200"><rect x="1" y="1" width="24" height="13" /><path d="M4 5h18M4 8h18" strokeDasharray="2 1.500" strokeWidth="1.800" /><path d="M7 11.500h12" /></svg>
          <Clock>4:49 PM<br />3/24/2021</Clock>
        </Notify>
      </TaskBar>
      <Notes />
    </Screen>
  );
}
